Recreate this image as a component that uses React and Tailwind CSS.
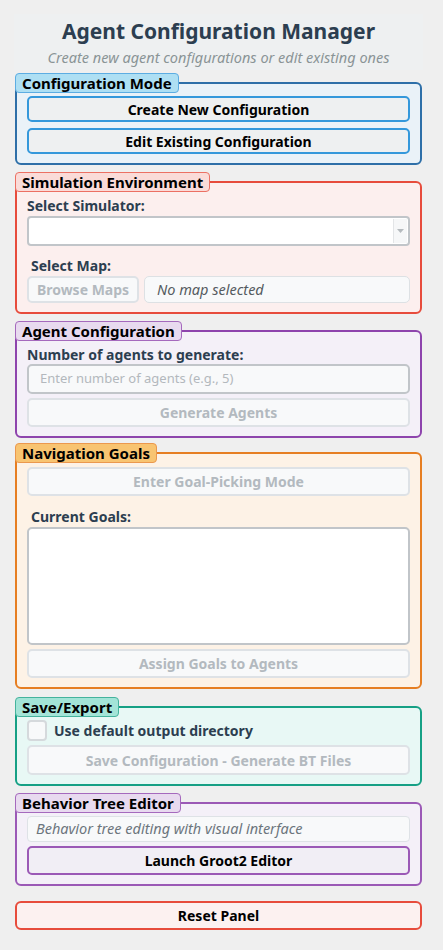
import React from "react";

const font = { fontFamily: '"Noto Sans", "DejaVu Sans", sans-serif' };

function Group({ title, tagCls, boxCls, children }) {
  return (
    <div className="flex flex-col items-start">
      <div
        className={`relative z-10 h-[20px] rounded-[4px] border px-[6px] text-[15px] font-bold leading-[18px] text-black ${tagCls}`}
      >
        {title}
      </div>
      <div className={`-mt-[11px] w-full rounded-[6px] border-2 px-[10px] pt-[12px] pb-[9px] ${boxCls}`}>
        {children}
      </div>
    </div>
  );
}

function DisabledBtn({ children, h = "h-[29px]", cls = "" }) {
  return (
    <div
      className={`flex ${h} w-full items-center justify-center rounded-[5px] border-2 border-[#dee2e6] bg-[#f8f9fa] text-[14px] font-bold text-[#b3b9bf] ${cls}`}
    >
      {children}
    </div>
  );
}

function Label({ children, cls = "" }) {
  return (
    <div className={`flex h-[20px] items-center text-[14px] font-bold text-[#2c3e50] ${cls}`}>{children}</div>
  );
}

export default function App() {
  return (
    <div className="min-h-[950px] w-[443px] bg-[#efefef]" style={font}>
      <div className="px-[15px] pr-[21px] pt-[14px]">
        <div className="-mx-[1px] flex h-[56px] flex-col items-center bg-[#eef0f1]">
          <div className="mt-[3px] text-[21px] font-bold leading-[28px] text-[#2c3e50]">
            Agent Configuration Manager
          </div>
          <div className="mt-[3px] text-[14.5px] italic leading-[18px] text-[#8a9496]">
            Create new agent configurations or edit existing ones
          </div>
        </div>

        <div className="mt-[3px] flex flex-col">
          <Group
            title="Configuration Mode"
            tagCls="bg-[#aedff3] border-[#5dade2]"
            boxCls="bg-[#eaf2f8] border-[#2e6fa8]"
          >
            <div className="flex h-[26px] items-center justify-center rounded-[5px] border-2 border-[#3498db] bg-[#eef0f1] text-[14px] font-bold text-black">
              Create New Configuration
            </div>
            <div className="mt-[6px] flex h-[26px] items-center justify-center rounded-[5px] border-2 border-[#3498db] bg-[#eef0f1] text-[14px] font-bold text-black">
              Edit Existing Configuration
            </div>
          </Group>

          <div className="mt-[7px]">
            <Group
              title="Simulation Environment"
              tagCls="bg-[#fadbd8] border-[#ec7063]"
              boxCls="bg-[#fcefee] border-[#e74c3c]"
            >
              <Label>Select Simulator:</Label>
              <div className="mt-[1px] flex h-[30px] w-full rounded-[4px] border-2 border-[#c1c5c9] bg-white">
                <div className="flex-1" />
                <div className="my-[1px] mr-[1px] flex w-[14px] items-center justify-center border-l border-[#e3e5e7] bg-[#f6f7f8]">
                  <svg width="7" height="4" viewBox="0 0 7 4">
                    <path d="M0 0 L7 0 L3.5 4 Z" fill="#b5babe" />
                  </svg>
                </div>
              </div>
              <Label cls="mt-[9px] pl-[4px]">Select Map:</Label>
              <div className="mt-[1px] flex h-[27px] gap-[5px]">
                <div className="flex h-full w-[112px] items-center justify-center rounded-[5px] border-2 border-[#dee2e6] bg-[#f8f9fa] text-[14px] font-bold text-[#b3b9bf]">
                  Browse Maps
                </div>
                <div className="flex h-full flex-1 items-center rounded-[5px] border border-[#dde1e4] bg-[#f8f9fa] pl-[12px] text-[14.5px] italic text-[#555b60]">
                  No map selected
                </div>
              </div>
            </Group>
          </div>

          <div className="mt-[7px]">
            <Group
              title="Agent Configuration"
              tagCls="bg-[#e8daef] border-[#a569bd]"
              boxCls="bg-[#f4f0f8] border-[#8e44ad]"
            >
              <Label>Number of agents to generate:</Label>
              <div className="flex h-[30px] w-full items-center rounded-[5px] border-2 border-[#c1c5c9] bg-[#f8f9fa] pl-[11px] text-[13px] text-[#b3b8bd]">
                Enter number of agents (e.g., 5)
              </div>
              <DisabledBtn cls="mt-[4px]">Generate Agents</DisabledBtn>
            </Group>
          </div>

          <div className="mt-[5px]">
            <Group
              title="Navigation Goals"
              tagCls="bg-[#f8c471] border-[#eb984e]"
              boxCls="bg-[#fdf2e6] border-[#e67e22]"
            >
              <DisabledBtn cls="mt-[1px]">Enter Goal-Picking Mode</DisabledBtn>
              <Label cls="mt-[10px] pl-[4px]">Current Goals:</Label>
              <div className="mt-[1px] h-[118px] w-full rounded-[5px] border-2 border-[#c1c5c9] bg-white" />
              <DisabledBtn cls="mt-[4px]">Assign Goals to Agents</DisabledBtn>
            </Group>
          </div>

          <div className="mt-[8px]">
            <Group
              title="Save/Export"
              tagCls="bg-[#a3e4d7] border-[#45b39d]"
              boxCls="bg-[#e8f8f5] border-[#16a085]"
            >
              <div className="flex h-[21px] items-center gap-[7px]">
                <div className="h-[21px] w-[20px] rounded-[4px] border-2 border-[#d5d9dc] bg-[#f8f9fa]" />
                <div className="text-[14px] font-bold text-[#2c3e50]">Use default output directory</div>
              </div>
              <DisabledBtn h="h-[30px]" cls="mt-[4px]">
                Save Configuration - Generate BT Files
              </DisabledBtn>
            </Group>
          </div>

          <div className="mt-[7px]">
            <Group
              title="Behavior Tree Editor"
              tagCls="bg-[#e8daef] border-[#a569bd]"
              boxCls="bg-[#f4f0f8] border-[#9b59b6]"
            >
              <div className="flex h-[26px] items-center rounded-[4px] border border-[#dee2e6] bg-[#f8f9fa] pl-[8px] text-[14.5px] italic text-[#6c757d]">
                Behavior tree editing with visual interface
              </div>
              <div className="mt-[4px] flex h-[29px] items-center justify-center rounded-[5px] border-2 border-[#9b59b6] bg-[#f1eef5] text-[14px] font-bold text-black">
                Launch Groot2 Editor
              </div>
            </Group>
          </div>

          <div className="mt-[15px] flex h-[29px] items-center justify-center rounded-[6px] border-2 border-[#e74c3c] bg-[#fcf1f0] text-[14px] font-bold text-black">
            Reset Panel
          </div>
        </div>
      </div>
    </div>
  );
}
